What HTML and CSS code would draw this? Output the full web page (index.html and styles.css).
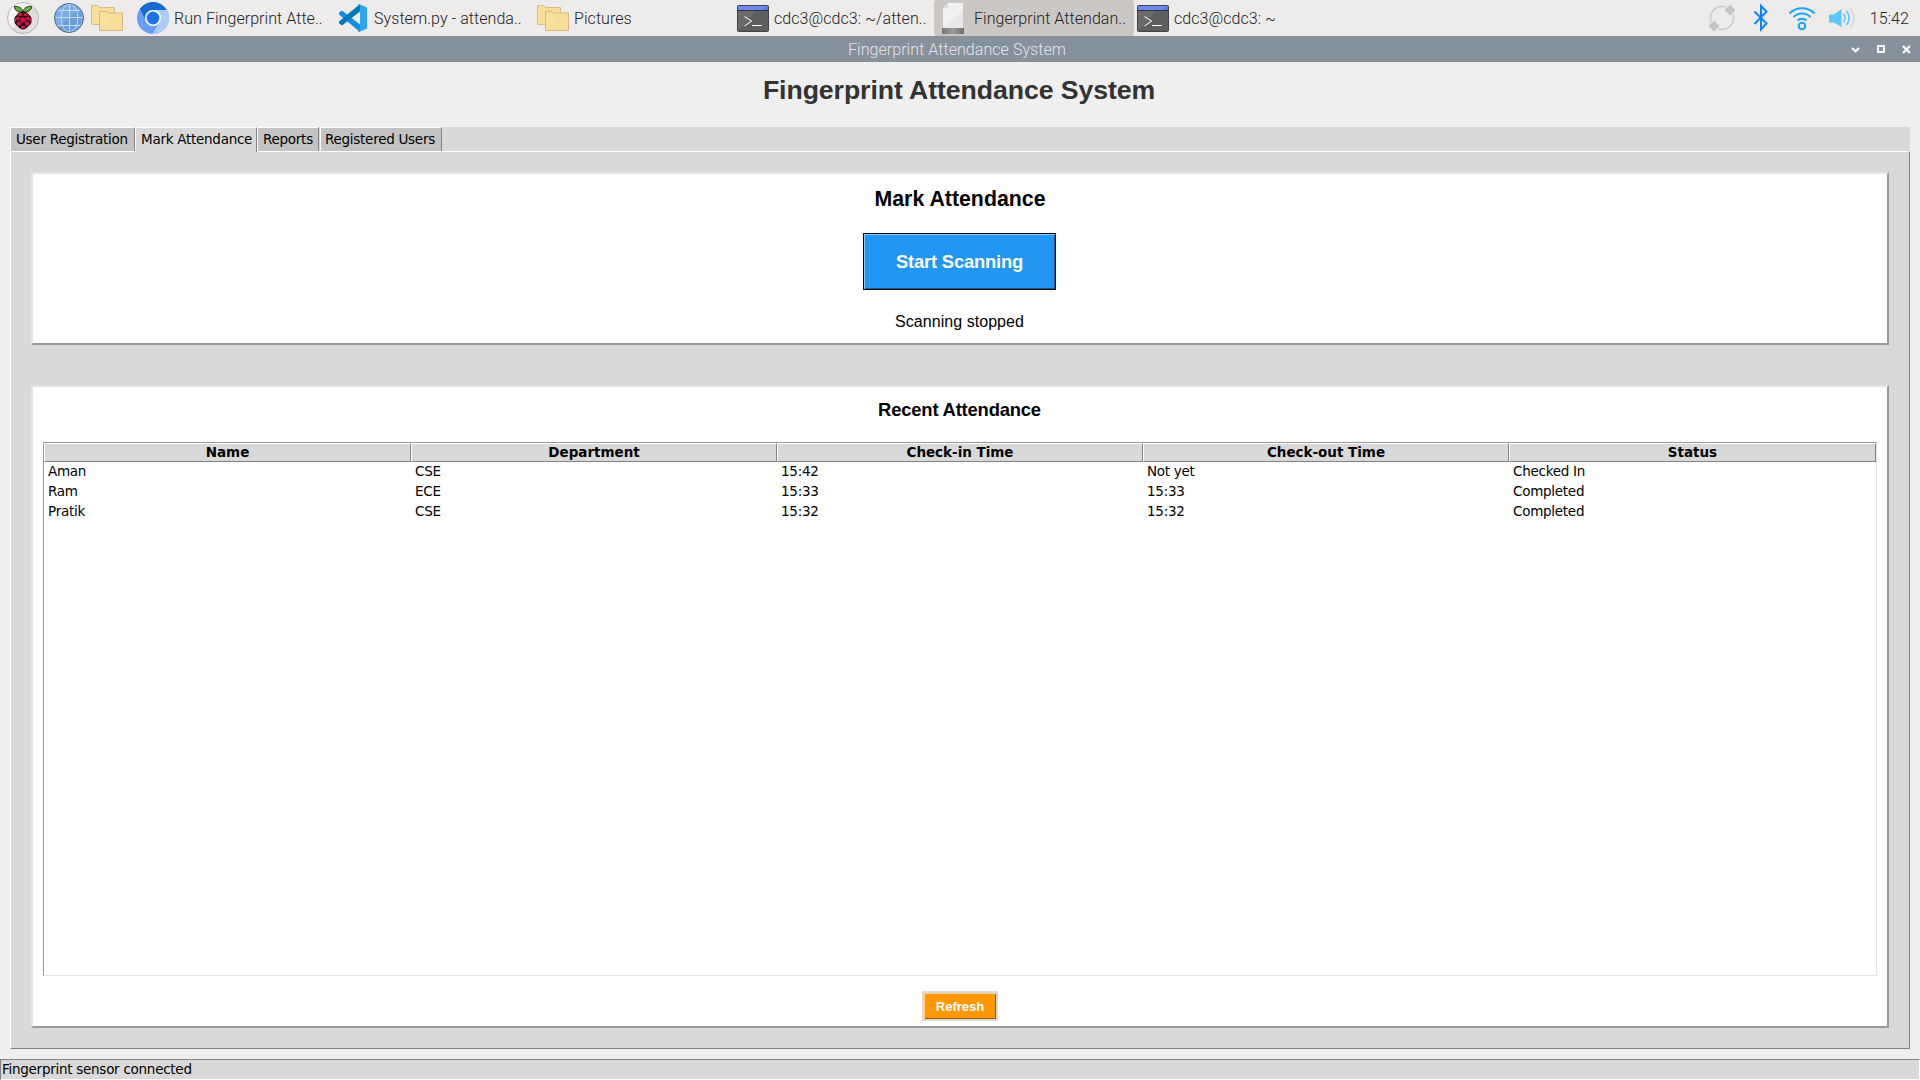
FILE: index.html
```html
<!DOCTYPE html>
<html lang="en">
<head>
<meta charset="utf-8">
<title>Fingerprint Attendance System</title>
<link rel="stylesheet" href="styles.css">
</head>
<body>
<svg class="defs" width="0" height="0">
  <defs>
    <linearGradient id="silver" x1="0" y1="0" x2="1" y2="1"><stop offset="0" stop-color="#fff"/><stop offset=".5" stop-color="#eee"/><stop offset=".51" stop-color="#d8d8d8"/><stop offset="1" stop-color="#e8e8e8"/></linearGradient>
    <linearGradient id="foot"><stop offset="0" stop-color="#777"/><stop offset=".5" stop-color="#999"/><stop offset="1" stop-color="#6c6c6c"/></linearGradient>
    <symbol id="folders" viewBox="0 0 32 36">
      <path d="M.5 5.500h6.500l1.500 2h15v17H.5z" fill="#f5df9a" stroke="#d9bd86"/>
      <path d="M8.500 11.500H15l1.500 1.500h15v17.500h-23z" fill="#f8e19c" stroke="#d3b680"/>
      <path d="M9 30L26 13.500h5V30z" fill="#f3da93" opacity=".5"/>
    </symbol>
    <symbol id="terminal" viewBox="0 0 32 36">
      <rect x=".5" y="5.500" width="31" height="26" rx="1" fill="#5e5e5e" stroke="#404246"/>
      <path d="M1 31V11h18z" fill="#707070" opacity=".7"/>
      <path d="M1 6h30v4H1z" fill="#5377e4"/><path d="M1 6h29l-4 4H1z" fill="#6a8bf2"/>
      <path d="M1 10.500h30" stroke="#333"/>
      <path d="M7.500 16.500l7 4.500-7 5" fill="none" stroke="#ddd" stroke-width="1.200"/><path d="M15 25.500h10" stroke="#fff"/>
    </symbol>
  </defs>
</svg>

<header class="taskbar">
  <div class="launchers">
    <svg width="32" height="36" viewBox="0 0 32 36">
      <circle cx="16" cy="18" r="15.500" fill="url(#silver)" stroke="#b5b5b5"/>
      <path d="M16 12C11 12.500 7.500 10.500 7.500 6.500 12 6 15 8 16 12zM16 12c5 .5 8.500-1.500 8.500-5.500C20 6 17 8 16 12z" fill="#6cb33e" stroke="#20351a"/>
      <path d="M16 11.500c3 0 5 1.500 6 3.500 2 1 3 3 2.500 5 .5 3-1 5-3 6-1.500 2-3.500 3.500-5.500 3.500S12 28 10.500 26c-2-1-3.500-3-3-6-.5-2 .5-4 2.500-5 1-2 3-3.500 6-3.500z" fill="#230a12"/>
      <g fill="#d01246"><circle cx="16" cy="20" r="2.700"/><ellipse cx="13.200" cy="14.700" rx="2.200" ry="1.600"/><ellipse cx="18.800" cy="14.700" rx="2.200" ry="1.600"/><circle cx="11" cy="18.500" r="1.900"/><circle cx="21" cy="18.500" r="1.900"/><circle cx="12" cy="23.500" r="2.200"/><circle cx="20" cy="23.500" r="2.200"/><ellipse cx="16" cy="27" rx="2.200" ry="1.600"/><ellipse cx="8.600" cy="20" rx=".8" ry="2"/><ellipse cx="23.400" cy="20" rx=".8" ry="2"/></g>
    </svg>
    <svg class="globe" width="30" height="36" viewBox="0 0 30 36">
      <circle cx="15" cy="18" r="14.500" fill="#7bade2"/>
      <path d="M4.500 28L25 8a14.500 14.500 0 0 1-20.500 20z" fill="#5f95d0" opacity=".6"/>
      <g fill="none" stroke="#c7dcf3"><path d="M15.500 4v28M1 17.500h28M3 10.500h24M3 25.500h24"/><ellipse cx="15.500" cy="18" rx="8.500" ry="14"/></g>
      <circle cx="15" cy="18" r="14.500" fill="none" stroke="#4c6684"/>
    </svg>
    <svg width="32" height="36"><use href="#folders"/></svg>
  </div>
  <nav class="tasks">
    <div class="task">
      <svg width="32" height="36" viewBox="0 0 32 36">
        <circle cx="16" cy="18" r="16" fill="#699df6"/>
        <path d="M16 10h13.800A16 16 0 0 1 15.500 34l7-12z" fill="#aecbfa"/>
        <path d="M3 8.700A16 16 0 0 1 29.800 10H16a8 8 0 0 0-7 11z" fill="#1967d2"/>
        <circle cx="16" cy="18" r="8" fill="#fff"/><circle cx="16" cy="18" r="6.400" fill="#1a73e8"/>
      </svg><span>Run Fingerprint Atte..</span>
    </div>
    <div class="task">
      <svg width="32" height="36" viewBox="0 0 32 36">
        <path d="M2 12.500l3-2 18 14V32L2 14.500z" fill="#1590df"/>
        <path d="M2 23.500l3 2 18-14V4L2 21.500z" fill="#0877bd"/>
        <path d="M22 4l8 3.500v21L22 32l-1.500-1 2.500-1V6l-2.500-1z" fill="#29a5f2"/>
      </svg><span>System.py - attenda..</span>
    </div>
    <div class="task"><svg width="32" height="36"><use href="#folders"/></svg><span>Pictures</span></div>
    <div class="task"><svg width="32" height="36"><use href="#terminal"/></svg><span>cdc3@cdc3: ~/atten..</span></div>
    <div class="task active">
      <svg width="32" height="36" viewBox="0 0 32 36">
        <path d="M6 8l5-5h15v25H6z" fill="#f1f1f1"/><path d="M11 3v5H6z" fill="#dadada"/>
        <path d="M6 27L26 11v17H6z" fill="#e8e8e8"/><path d="M5 28h22v6H5z" fill="url(#foot)"/>
      </svg><span>Fingerprint Attendan..</span>
    </div>
    <div class="task"><svg width="32" height="36"><use href="#terminal"/></svg><span>cdc3@cdc3: ~</span></div>
  </nav>
  <div class="tray">
    <svg width="28" height="36" viewBox="0 0 28 36"><circle cx="14" cy="18" r="11.500" fill="none" stroke="#cdcdcd" stroke-width="1.600"/><g fill="#c5c5c5" stroke="#edecea"><rect x="17.500" y="5.500" width="9" height="9" rx="2" transform="rotate(45 22 10)"/><rect x="1.500" y="21.500" width="9" height="9" rx="2" transform="rotate(45 6 26)"/></g></svg>
    <svg class="bt" width="16" height="36" viewBox="0 0 16 36"><path d="M1.500 11.500l12 12L8 29.500V6l5.500 5.500-12 12.500" fill="none" stroke="#0a84ff" stroke-width="2"/></svg>
    <svg class="wifi" width="28" height="36" viewBox="0 0 28 36"><g fill="none" stroke="#1aa3f5" stroke-width="2"><path d="M1.500 13.500a17.500 17.500 0 0 1 25 0M5.500 17a12 12 0 0 1 17 0M9.500 20.500a6.500 6.500 0 0 1 9 0"/><circle cx="14" cy="26" r="3.300"/></g></svg>
    <svg class="vol" width="28" height="36" viewBox="0 0 28 36"><path d="M1 14.500h5L13.500 9v18L6 22.500H1z" fill="#5ec6ff"/><g fill="none" stroke-width="1.700"><path d="M15.500 14q3 4 0 8M18.500 11q5.500 7 0 14" stroke="#5ec6ff"/><path d="M22 8.500q8 9.500 0 19" stroke="#d8d8d8"/></g></svg>
    <time>15:42</time>
  </div>
</header>

<div class="titlebar">
  <span>Fingerprint Attendance System</span>
  <div class="controls">
    <svg width="9" height="9" viewBox="0 0 9 9"><path d="M1 3l3.500 3.200L8 3" fill="none" stroke="#fff" stroke-width="2.200"/></svg>
    <svg width="8" height="8" viewBox="0 0 8 8"><path d="M1 1h6v6H1z" fill="none" stroke="#fff" stroke-width="2"/></svg>
    <svg width="9" height="9" viewBox="0 0 9 9"><path d="M1 1l7 7M8 1L1 8" stroke="#fff" stroke-width="2.200"/></svg>
  </div>
</div>

<main>
  <h1>Fingerprint Attendance System</h1>
  <div class="notebook">
    <div class="tabs">
      <div class="tab t1">User Registration</div>
      <div class="tab t2 selected">Mark Attendance</div>
      <div class="tab t3">Reports</div>
      <div class="tab t4">Registered Users</div>
    </div>
    <div class="pane">
      <section class="card scan">
        <h2>Mark Attendance</h2>
        <button class="start">Start Scanning</button>
        <p>Scanning stopped</p>
      </section>
      <section class="card recent">
        <h3>Recent Attendance</h3>
        <div class="tree">
          <div class="row head"><span>Name</span><span>Department</span><span>Check-in Time</span><span>Check-out Time</span><span>Status</span></div>
          <div class="row"><span>Aman</span><span>CSE</span><span>15:42</span><span>Not yet</span><span>Checked In</span></div>
          <div class="row"><span>Ram</span><span>ECE</span><span>15:33</span><span>15:33</span><span>Completed</span></div>
          <div class="row"><span>Pratik</span><span>CSE</span><span>15:32</span><span>15:32</span><span>Completed</span></div>
        </div>
        <button class="refresh">Refresh</button>
      </section>
    </div>
  </div>
</main>
<footer class="status">Fingerprint sensor connected</footer>
</body>
</html>
```

FILE: styles.css
```css
* { box-sizing: border-box; margin: 0; padding: 0; }
body {
  width: 1920px; height: 1080px; overflow: hidden;
  display: flex; flex-direction: column;
  background: #efefef; color: #000;
  font-family: "DejaVu Sans", sans-serif; font-size: 13.500px; letter-spacing: -.27px;
}
svg { display: block; flex: none; }
.defs { position: absolute; }

.taskbar {
  height: 36px; flex: none; display: flex; background: #edecea; color: #222;
  font: 300 16px/38px Roboto, sans-serif; letter-spacing: .06px; white-space: nowrap;
}
.launchers { display: flex; width: 134px; padding-left: 7px; }
.globe { margin: 0 7px 0 15px; }
.tasks { display: flex; }
.task { width: 200px; height: 36px; padding-left: 3px; display: flex; gap: 5px; }
.task.active { background: #cbc7c4; border-radius: 3px; }
.tray { margin-left: auto; display: flex; padding-right: 11px; }
.bt { margin-left: 17px; }
.wifi { margin-left: 19px; }
.vol { margin: 0 14px 0 12px; }

.titlebar {
  height: 26px; flex: none; background: #87919b; color: #e3e6e8;
  display: grid; grid-template-columns: 1fr auto 1fr; align-items: center;
  font: 300 16px/26px Roboto, sans-serif; letter-spacing: .06px;
}
.titlebar span { grid-column: 2; padding: 2px 6px 0 0; line-height: 24px; }
.controls { justify-self: end; display: flex; align-items: center; gap: 17px; padding-right: 9px; }

main { flex: 1; min-height: 0; padding: 10px 10px; display: flex; flex-direction: column; }
h1, h2, h3, p, button { font-family: "Liberation Sans", Arial, sans-serif; letter-spacing: 0; }
h1 { height: 55px; padding-right: 2px; font-size: 26.670px; line-height: 36px; text-align: center; color: #333; letter-spacing: -.08px; }

.notebook { flex: 1; display: flex; flex-direction: column; background: #d9d9d9; }
.tabs { display: flex; height: 24px; }
.tab {
  background: #c3c3c3; border: solid; border-width: 1px; border-color: #fff #828282 transparent #fff;
  border-bottom: 0; border-top-right-radius: 2px; line-height: 23px; padding-left: 5px; white-space: nowrap;
}
.t1 { width: 125px; }
.t2 { width: 122px; }
.t3 { width: 62px; }
.t4 { width: 122px; margin-left: 1px; padding-left: 4px; }
.tab.selected { background: #d9d9d9; height: 25px; position: relative; }
.pane {
  flex: 1; border: 1px solid; border-color: #fff #828282 #828282 #fff;
  padding: 20px; display: flex; flex-direction: column; gap: 40px;
}
.card {
  background: #fff; border: 2px solid; border-color: #e4e4e4 #999 #999 #e4e4e4;
  display: flex; flex-direction: column; align-items: center;
}
.scan { height: 173px; }
h2 { font-size: 21.330px; line-height: 24px; margin-top: 13px; }
.start {
  width: 193px; height: 57px; margin: 22px 1px 0 0; background: #2196f3; color: #fff;
  border: 1px solid #000; box-shadow: inset 1px 1px #8fcaf9, inset -1px -1px #145a92;
  font-size: 18.400px; font-weight: bold; letter-spacing: -.2px;
}
.scan p { font-size: 16px; line-height: 20px; margin: 22px 1px 0 0; letter-spacing: .05px; }
.recent { flex: 1; padding: 0 10px; }
h3 { font-size: 18.400px; line-height: 22px; margin: 12px 1px 21px 0; letter-spacing: -.18px; }
.tree {
  width: 1834px; height: 534px;
  border: 1px solid; border-color: #999 #e4e4e4 #e4e4e4 #999;
}
.row { display: grid; grid-template-columns: 367px 366px 366px 366px 367px; line-height: 19px; height: 20px; }
.row span { padding-left: 4px; }
.head { height: 19px; line-height: 16px; font-weight: bold; text-align: center; letter-spacing: -.02px; }
.head span { height: 19px; background: #d9d9d9; border: 1px solid; border-color: #fff #828282 #828282 #fff; padding: 0; }
.refresh {
  width: 76px; height: 30px; margin-top: 15px; background: #ff9800; color: #fff;
  border: 2px solid #d9d9d9; box-shadow: inset 1px 1px #ffcb80, inset -1px -1px #995b00;
  font-size: 13px; font-weight: bold;
}
.status {
  height: 21px; flex: none; background: #d9d9d9; border: 1px solid;
  border-color: #828282 #fff #fff #828282; line-height: 19px; padding-left: 1px;
}
```
